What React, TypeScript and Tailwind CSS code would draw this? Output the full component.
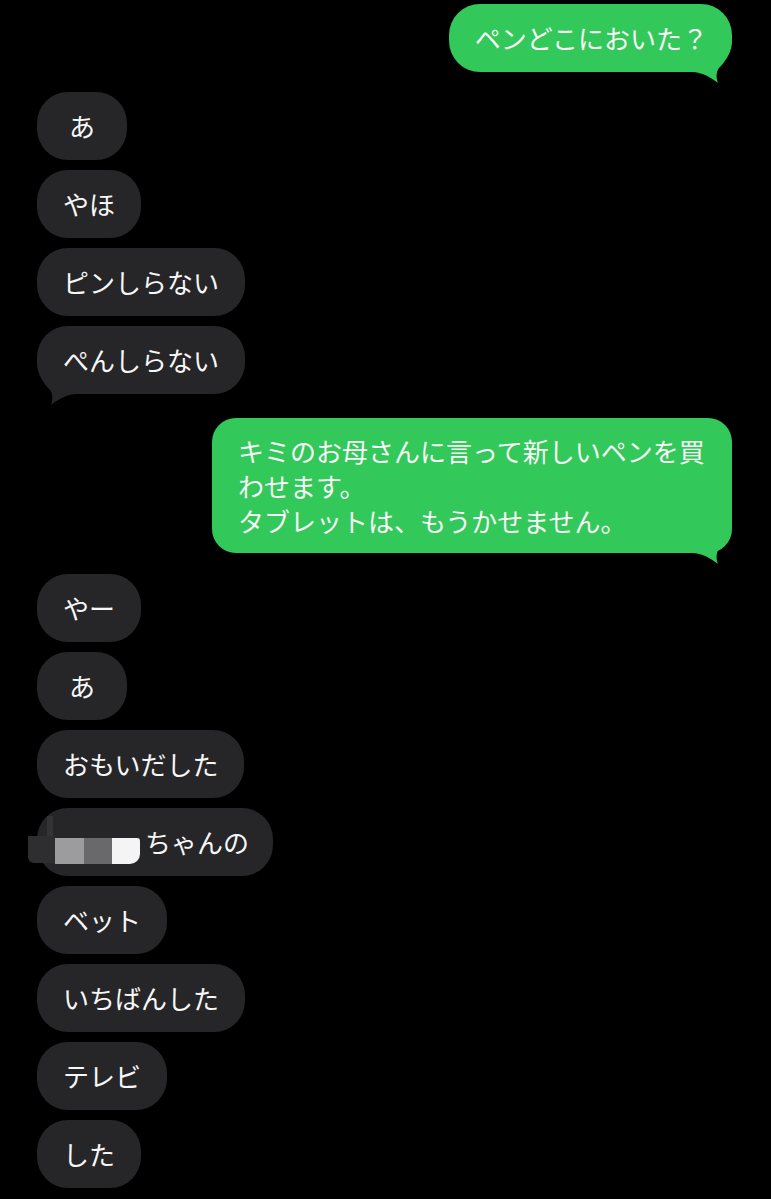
import React from 'react';

type Msg = {
  from: 'me' | 'them';
  lines: string[];
  mt: string;
  tail?: boolean;
  hidden?: boolean;
};

const messages: Msg[] = [
  { from: 'me', lines: ['ペンどこにおいた？'], mt: 'mt-[4px]', tail: true },
  { from: 'them', lines: ['あ'], mt: 'mt-[20px]' },
  { from: 'them', lines: ['やほ'], mt: 'mt-[10px]' },
  { from: 'them', lines: ['ピンしらない'], mt: 'mt-[10px]' },
  { from: 'them', lines: ['ぺんしらない'], mt: 'mt-[10px]', tail: true },
  {
    from: 'me',
    lines: ['キミのお母さんに言って新しいペンを買', 'わせます。', 'タブレットは、もうかせません。'],
    mt: 'mt-[24px]',
    tail: true,
  },
  { from: 'them', lines: ['やー'], mt: 'mt-[21px]' },
  { from: 'them', lines: ['あ'], mt: 'mt-[10px]' },
  { from: 'them', lines: ['おもいだした'], mt: 'mt-[10px]' },
  { from: 'them', lines: ['ちゃんの'], mt: 'mt-[10px]', hidden: true },
  { from: 'them', lines: ['ベット'], mt: 'mt-[10px]' },
  { from: 'them', lines: ['いちばんした'], mt: 'mt-[10px]' },
  { from: 'them', lines: ['テレビ'], mt: 'mt-[10px]' },
  { from: 'them', lines: ['した'], mt: 'mt-[10px]' },
];

// tail drawn against the bubble's bottom-right corner
function Tail({ color, flip }: { color: string; flip?: boolean }) {
  return (
    <svg
      width="40"
      height="50"
      viewBox="0 0 40 50"
      className={
        flip
          ? 'absolute left-0 bottom-[-12px] -scale-x-100'
          : 'absolute right-0 bottom-[-12px]'
      }
    >
      <path
        d="M0 0 L40 0 L40 6 C39 16 35 26 27 34 C24 38 24 44 26 49 C18 43 10 38 0 38 Z"
        fill={color}
      />
    </svg>
  );
}

// pixelated blur over the name
function Mosaic() {
  return (
    <div className="absolute left-[-9px] top-[8px]">
      <div className="ml-[19px] w-[6px] h-[20px] bg-[#333336]" />
      <div className="flex items-start">
        <div className="w-[27px] h-[27px] bg-[#2e2e31] rounded-bl-[6px]" />
        <div className="w-[29px] h-[26px] mt-[2px] bg-[#9c9c9f]" />
        <div className="w-[28px] h-[26px] mt-[2px] bg-[#69696c]" />
        <div className="w-[28px] h-[26px] mt-[2px] bg-[#f4f4f4] rounded-br-[10px] rounded-tr-[3px]" />
      </div>
    </div>
  );
}

function Bubble({ m }: { m: Msg }) {
  const me = m.from === 'me';
  const multi = m.lines.length > 1;
  const color = me ? '#32c85a' : '#262628';
  return (
    <div className={`${m.mt} ${me ? 'self-end' : 'self-start'} relative`}>
      <div
        className={`relative z-10 text-[26px] text-[#f7f7f7] ${
          multi ? 'rounded-[24px] py-[15px] leading-[35px]' : 'rounded-[31px] py-[17px] leading-[34px]'
        } ${me ? 'bg-[#32c85a]' : 'bg-[#262628] min-w-[90px] text-center'} ${
          m.hidden ? 'pl-[108px] pr-[24px]' : me ? 'pl-[26px] pr-[24px]' : 'px-[26px]'
        } ${multi ? 'w-[520px] text-left' : ''}`}
      >
        {m.lines.map((l, i) => (
          <div key={i} className="whitespace-nowrap">
            {l}
          </div>
        ))}
        {m.hidden && <Mosaic />}
      </div>
      {m.tail && <Tail color={color} flip={!me} />}
    </div>
  );
}

function App() {
  return (
    <div
      className="w-[771px] h-[1199px] overflow-hidden bg-black"
      style={{ fontFamily: '"Noto Sans CJK JP", "Noto Sans", sans-serif' }}
    >
      <div className="flex flex-col pl-[37px] pr-[39px]">
        {messages.map((m, i) => (
          <Bubble key={i} m={m} />
        ))}
      </div>
    </div>
  );
}

export default App;
